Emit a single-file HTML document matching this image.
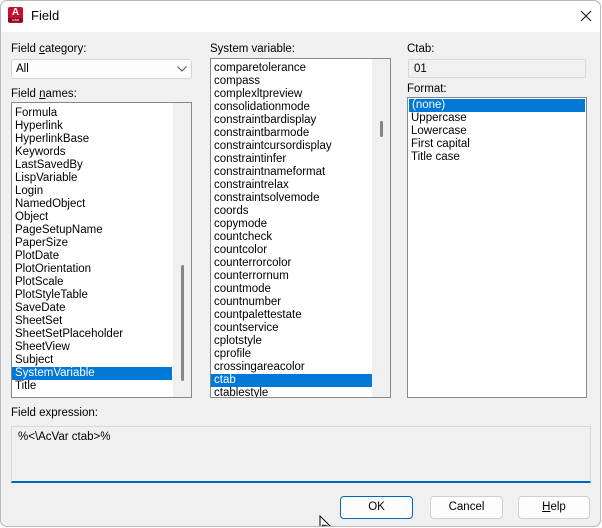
<!DOCTYPE html>
<html><head><style>
*{margin:0;padding:0;box-sizing:border-box}
body{width:602px;height:528px;background:#fff;font-family:"Liberation Sans",sans-serif;font-size:11.5px;color:#000;position:relative;overflow:hidden}
.win{position:absolute;left:0;top:0;width:601px;height:527px;background:#f0f0f0;border-radius:7px;overflow:hidden}
.frame{position:absolute;left:0;top:0;width:601px;height:527px;border:1px solid #b8b8b8;border-radius:7px;pointer-events:none}
.title{position:absolute;left:0;top:0;width:100%;height:32px;background:#fff}
.a{position:absolute}
.lbl{position:absolute;font-size:11.5px;line-height:14px}
.list{position:absolute;background:#fff;border:1px solid #828790;overflow:hidden}
.it{height:13px;line-height:13px;padding-left:3px;white-space:nowrap}
.sel{background:#0078d7;color:#fff}
.sb{position:absolute;top:0;bottom:0;right:0;width:18px;background:#f0f0f0}
.th{position:absolute;width:3px;background:#858585;border-radius:2px}
.btn{position:absolute;height:23px;border:1px solid #d0d0d0;background:#fdfdfd;border-radius:4px;text-align:center;line-height:21px;font-size:11.5px}
</style></head><body>
<div class="win">
<div class="title">
 <div class="a" style="left:8px;top:7px;width:15px;height:16px;background:#c8102e;border-radius:2px;color:#fff;font-weight:bold;font-size:10px;line-height:11px;text-align:center">A<div style="font-size:3px;line-height:4px;background:#8a0a1f">CAD</div></div>
 <div class="a" style="left:31px;top:8px;font-size:13px">Field</div>
 <svg class="a" style="left:580px;top:10px" width="12" height="12"><path d="M1 1L11 11M11 1L1 11" stroke="#222" stroke-width="1.2"/></svg>
</div>

<div class="lbl" style="left:11px;top:42px">Field <u>c</u>ategory:</div>
<div class="a" style="left:11px;top:59px;width:181px;height:20px;background:#fdfdfd;border:1px solid #d5d5d5;border-radius:3px"><span class="a" style="left:4px;top:3px">All</span>
<svg class="a" style="left:165px;top:6px" width="10" height="6"><path d="M0.5 0.5L5 5L9.5 0.5" stroke="#555" fill="none"/></svg></div>

<div class="lbl" style="left:11px;top:87px">Field <u>n</u>ames:</div>
<div class="list" style="left:11px;top:102px;width:181px;height:296px;padding-top:4px">
<div class="it">Formula</div><div class="it">Hyperlink</div><div class="it">HyperlinkBase</div><div class="it">Keywords</div><div class="it">LastSavedBy</div><div class="it">LispVariable</div><div class="it">Login</div><div class="it">NamedObject</div><div class="it">Object</div><div class="it">PageSetupName</div><div class="it">PaperSize</div><div class="it">PlotDate</div><div class="it">PlotOrientation</div><div class="it">PlotScale</div><div class="it">PlotStyleTable</div><div class="it">SaveDate</div><div class="it">SheetSet</div><div class="it">SheetSetPlaceholder</div><div class="it">SheetView</div><div class="it">Subject</div><div class="it sel" style="width:160px">SystemVariable</div><div class="it">Title</div>
<div class="sb"><div class="th" style="left:8px;top:162px;height:116px"></div></div>
</div>

<div class="lbl" style="left:210px;top:42px">System variable:</div>
<div class="list" style="left:210px;top:58px;width:181px;height:340px;padding-top:3px">
<div class="it">comparetolerance</div><div class="it">compass</div><div class="it">complexltpreview</div><div class="it">consolidationmode</div><div class="it">constraintbardisplay</div><div class="it">constraintbarmode</div><div class="it">constraintcursordisplay</div><div class="it">constraintinfer</div><div class="it">constraintnameformat</div><div class="it">constraintrelax</div><div class="it">constraintsolvemode</div><div class="it">coords</div><div class="it">copymode</div><div class="it">countcheck</div><div class="it">countcolor</div><div class="it">counterrorcolor</div><div class="it">counterrornum</div><div class="it">countmode</div><div class="it">countnumber</div><div class="it">countpalettestate</div><div class="it">countservice</div><div class="it">cplotstyle</div><div class="it">cprofile</div><div class="it">crossingareacolor</div><div class="it sel" style="width:162px">ctab</div><div class="it">ctablestyle</div>
<div class="sb"><div class="th" style="left:8px;top:62px;height:16px"></div></div>
</div>

<div class="lbl" style="left:407px;top:42px">Ctab:</div>
<div class="a" style="left:408px;top:59px;width:178px;height:19px;background:#f0f0f0;border:1px solid #d8d8d8;border-radius:2px"><span class="a" style="left:5px;top:3px">01</span></div>

<div class="lbl" style="left:407px;top:82px">Format:</div>
<div class="list" style="left:407px;top:97px;width:180px;height:301px;padding:1px 1px 1px 0">
<div class="it sel" style="margin-left:1px">(none)</div><div class="it">Uppercase</div><div class="it">Lowercase</div><div class="it">First capital</div><div class="it">Title case</div>
</div>

<div class="lbl" style="left:11px;top:406px">Field expression:</div>
<div class="a" style="left:11px;top:426px;width:580px;height:57px;background:#f0f0f0;border:1px solid #d8d8d8;border-bottom:2px solid #0067c0"><span class="a" style="left:6px;top:4px">%&lt;\AcVar ctab&gt;%</span></div>

<div class="btn" style="left:340px;top:496px;width:73px;border-color:#0067c0">OK</div>
<div class="btn" style="left:430px;top:496px;width:73px">Cancel</div>
<div class="btn" style="left:518px;top:496px;width:72px"><u>H</u>elp</div>
<svg class="a" style="left:319px;top:515px" width="14" height="14"><path d="M1 1L1 13L4 10L12 12Z" fill="#fff" stroke="#000"/></svg>
</div>
<div class="frame"></div>
</body></html>
